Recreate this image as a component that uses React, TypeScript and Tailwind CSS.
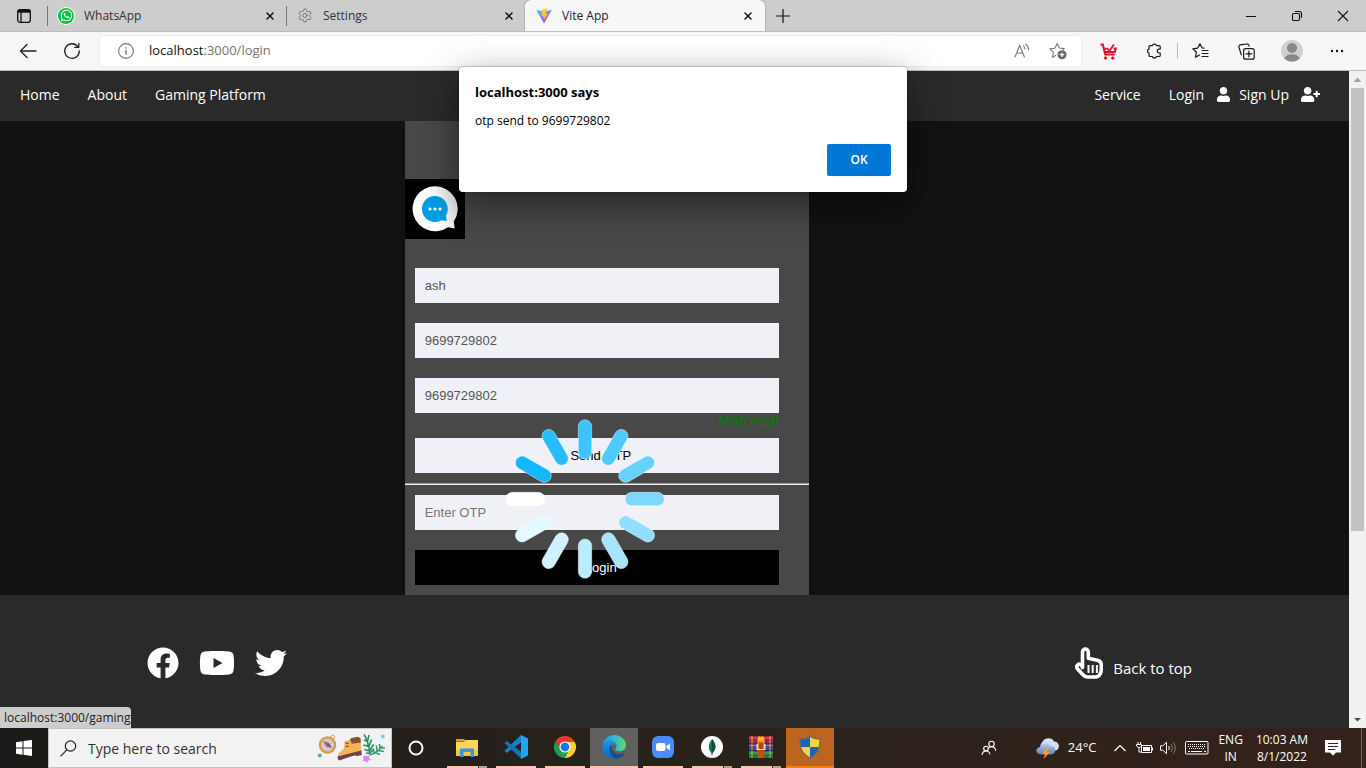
import React, { useState } from "react";
import { Settings, X } from "lucide-react";
import { FaFacebook, FaTwitter, FaUser, FaUserPlus, FaWhatsapp, FaYoutube } from "react-icons/fa";

/* ---------- Browser icons ---------- */

function TabActionsIcon() {
  return (
    <svg width="16" height="16" viewBox="0 0 16 16" fill="none" stroke="#111" strokeWidth="1.3">
      <rect x="1.7" y="1.7" width="12.6" height="12.6" rx="2.2" />
      <path d="M1.7 3.2h12.6" strokeWidth="3" />
      <path d="M5 4v10" />
    </svg>
  );
}

function WhatsAppIcon() {
  return (
    <span className="flex size-4 items-center justify-center rounded-full bg-[#0cc143] text-white ring-1 ring-white">
      <FaWhatsapp size={13} />
    </span>
  );
}

function ViteIcon() {
  return (
    <svg width="16" height="16" viewBox="0 0 16 16">
      <defs>
        <linearGradient id="viteBody" x1="0" y1="0" x2="0.6" y2="1">
          <stop offset="0" stopColor="#41d1ff" />
          <stop offset="1" stopColor="#bd34fe" />
        </linearGradient>
        <linearGradient id="viteBolt" x1="0" y1="0" x2="0" y2="1">
          <stop offset="0" stopColor="#ffdd35" />
          <stop offset="1" stopColor="#ffa800" />
        </linearGradient>
      </defs>
      <path d="M.3 2 8 15.4 15.7 2 8 3.3z" fill="url(#viteBody)" />
      <path d="M12 .3 5.900 1.400 5.500 8l1.900-.4-.5 2.500 1.200-.3-.8 3.600L11.800 6l-1.900.3.700-2.500z" fill="url(#viteBolt)" />
    </svg>
  );
}

function PlusIcon() {
  return (
    <svg width="16" height="16" viewBox="0 0 16 16" stroke="#111" strokeWidth="1.2">
      <path d="M8 1v14M1 8h14" />
    </svg>
  );
}

function MinimizeIcon() {
  return (
    <svg width="12" height="12" viewBox="0 0 12 12" stroke="#111">
      <path d="M1 6.500h10" />
    </svg>
  );
}

function RestoreIcon() {
  return (
    <svg width="12" height="12" viewBox="0 0 12 12" fill="none" stroke="#111" strokeWidth="1.1">
      <rect x="1.500" y="3.500" width="7" height="7" rx="1.200" />
      <path d="M3.800 1.500h4.700a2 2 0 0 1 2 2v4.600" />
    </svg>
  );
}

function CloseWindowIcon() {
  return (
    <svg width="12" height="12" viewBox="0 0 12 12" stroke="#111" strokeWidth="1.1">
      <path d="m1 1 10 10M11 1 1 11" />
    </svg>
  );
}

function BackIcon() {
  return (
    <svg width="18" height="16" viewBox="0 0 18 16" fill="none" stroke="#222" strokeWidth="1.3" strokeLinecap="round" strokeLinejoin="round">
      <path d="M17 8H1.500M8 1.500 1.500 8 8 14.500" />
    </svg>
  );
}

function ReloadIcon() {
  return (
    <svg width="18" height="18" viewBox="0 0 18 18" fill="none" stroke="#222" strokeWidth="1.300" strokeLinecap="round">
      <path d="M16.300 9A7.300 7.300 0 1 1 14.800 4.600" />
      <path d="M15.800 1.300v4h-4" />
    </svg>
  );
}

function InfoIcon() {
  return (
    <svg width="16" height="16" viewBox="0 0 16 16" fill="none" stroke="#757575" strokeWidth="1.100">
      <circle cx="8" cy="8" r="7.400" />
      <path d="M8 7v4.700" strokeWidth="1.400" />
      <circle cx="8" cy="4.900" r=".5" fill="#757575" strokeWidth=".6" />
    </svg>
  );
}

function ReadAloudIcon() {
  return (
    <svg width="16" height="16" viewBox="0 0 16 16" fill="none" stroke="#777" strokeWidth="1.100" strokeLinecap="round">
      <path d="M1 14 5.700 2.500 10.400 14M2.700 10h6" />
      <path d="M9.500 3c1 .7 1.400 1.700 1.400 3M11.700 1.200c1.900 1.300 2.900 3.200 2.900 5.600" />
    </svg>
  );
}

function StarAddIcon() {
  return (
    <svg width="18" height="18" viewBox="0 0 18 18" fill="none">
      <path
        d="M8.200 1.500 10.300 6l4.900.6-1.600 1.600M7 13.300l-3.500 2 .9-4.900L.9 6.900 5.900 6.200 8.200 1.500"
        stroke="#777"
        strokeWidth="1.100"
        strokeLinejoin="round"
      />
      <circle cx="13" cy="12.700" r="4.500" fill="#666" />
      <path d="M13 10.400V15M10.700 12.700h4.600" stroke="#fff" strokeWidth="1.200" />
    </svg>
  );
}

function CartIcon() {
  return (
    <svg width="17" height="17" viewBox="0 0 17 17" fill="none" stroke="#e60f25" strokeWidth="2">
      <path d="M.5 1.500h2.300l2.400 9.900h9.500" />
      <path d="M3.500 5.800h3.200M4.500 9h10.200l1.200-3.600h-2.500" />
      <path d="m7 5.200 2.500 2.600L13.900 1.500" strokeWidth="1.700" />
      <circle cx="5.500" cy="15" r="1.300" fill="#e60f25" strokeWidth=".8" />
      <circle cx="12.800" cy="15" r="1.300" fill="#e60f25" strokeWidth=".8" />
    </svg>
  );
}

function PuzzleIcon() {
  return (
    <svg width="16" height="16" viewBox="0 0 16 16" fill="none" stroke="#1a1a1a" strokeWidth="1.200" strokeLinejoin="round">
      <path d="M4 2.600h2.300a2.200 2.200 0 0 1 4.200 0h2.700a1 1 0 0 1 1 1v2.600h-1a1.900 1.900 0 0 0 0 3.800h1v2.500a1 1 0 0 1-1 1h-2.700a2.200 2.200 0 0 1-4.200 0H4a1 1 0 0 1-1-1V10a2 2 0 0 1 0-3.900V3.600a1 1 0 0 1 1-1z" />
    </svg>
  );
}

function FavoritesIcon() {
  return (
    <svg width="17" height="16" viewBox="0 0 17 16" fill="none" stroke="#1a1a1a" strokeWidth="1.200" strokeLinejoin="round" strokeLinecap="round">
      <path d="m12 5.100-2-.3L7.900.8 5.700 5.100.8 5.800l3.600 3.400-.9 4.900 4-2.100" />
      <path d="M10 7.500h6M10 10.500h6M10 13.500h6" />
    </svg>
  );
}

function CollectionsIcon() {
  return (
    <svg width="17" height="17" viewBox="0 0 17 17" fill="none" stroke="#1a1a1a" strokeWidth="1.200" strokeLinecap="round">
      <rect x="5.600" y="5.600" width="10.600" height="10.600" rx="2" />
      <path d="M10.900 8v5.800M8 10.900h5.800" />
      <path d="M3.300 11.800 1 4.500a2 2 0 0 1 1.300-2.600L8.500.9a2 2 0 0 1 2.300 1.200l.4 1.200" />
    </svg>
  );
}

function AvatarIcon() {
  return (
    <svg width="22" height="22" viewBox="0 0 22 22">
      <defs>
        <clipPath id="avatarClip">
          <circle cx="11" cy="11" r="10.500" />
        </clipPath>
      </defs>
      <circle cx="11" cy="11" r="11" fill="#d2d0ce" />
      <circle cx="11" cy="8" r="5" fill="#8a8886" />
      <ellipse cx="11" cy="19" rx="7.800" ry="4.700" fill="#8a8886" clipPath="url(#avatarClip)" />
    </svg>
  );
}

function MoreIcon() {
  return (
    <svg width="14" height="4" viewBox="0 0 14 4" fill="#111">
      <circle cx="2" cy="2" r="1.200" />
      <circle cx="7" cy="2" r="1.200" />
      <circle cx="12" cy="2" r="1.200" />
    </svg>
  );
}

/* ---------- Browser chrome ---------- */

function Tab({ icon, title, active = false }: { icon: React.ReactNode; title: string; active?: boolean }) {
  return (
    <div
      className={
        active
          ? "-ml-px flex h-8 w-60 items-center rounded-t-md bg-[#f7f7f7] pr-[11px] pl-[11px] shadow-[0_0_2px_rgba(0,0,0,0.4)]"
          : "flex h-8 w-[239px] items-center border-l border-transparent pr-[11px] pl-[9px]"
      }
    >
      <span className="flex size-4 items-center justify-center">{icon}</span>
      <span className={active ? "ml-[10px] flex-1 text-[#222]" : "ml-[10px] flex-1 text-[#333]"}>{title}</span>
      <button type="button" aria-label={"Close " + title} className="flex size-3 items-center justify-center text-[#111]">
        <X size={12} strokeWidth={3} />
      </button>
    </div>
  );
}

function ToolButton({ label, children }: { label: string; children: React.ReactNode }) {
  return (
    <button type="button" aria-label={label} className="flex h-8 w-full items-center justify-center">
      {children}
    </button>
  );
}

function BrowserHeader() {
  return (
    <header>
      <div className="flex h-8 items-center overflow-hidden border-b border-[#bdbdbd] bg-[#cdcdcd] text-[12px]">
        <button type="button" aria-label="Tab actions" className="flex h-5 w-12 items-center justify-center border-r border-[#777]">
          <TabActionsIcon />
        </button>
        <Tab icon={<WhatsAppIcon />} title="WhatsApp" />
        <span className="-ml-px h-5 w-px bg-[#777]" />
        <Tab icon={<Settings size={17} strokeWidth={1.5} color="#777" />} title="Settings" />
        <Tab icon={<ViteIcon />} title="Vite App" active />
        <button type="button" aria-label="New tab" className="flex h-8 w-9 items-center justify-center">
          <PlusIcon />
        </button>
        <div className="ml-auto flex">
          <button type="button" aria-label="Minimize" className="flex h-8 w-[46px] items-center justify-center">
            <MinimizeIcon />
          </button>
          <button type="button" aria-label="Restore" className="flex h-8 w-[46px] items-center justify-center">
            <RestoreIcon />
          </button>
          <button type="button" aria-label="Close window" className="flex h-8 w-[46px] items-center justify-center">
            <CloseWindowIcon />
          </button>
        </div>
      </div>
      <div className="flex h-[39px] items-center border-b border-[#b9bfb9] bg-[#f7f7f7] pl-1.5">
        <div className="grid w-[88px] grid-cols-2">
          <ToolButton label="Back">
            <BackIcon />
          </ToolButton>
          <ToolButton label="Refresh">
            <ReloadIcon />
          </ToolButton>
        </div>
        <div className="ml-1.5 flex h-[30px] flex-1 items-center rounded bg-white pl-[18px] shadow-[0_0_3px_rgba(0,0,0,0.1)]">
          <InfoIcon />
          <span className="ml-[15px] flex-1 text-[13px] text-[#757575]">
            <span className="text-[#111]">localhost</span>:3000/login
          </span>
          <button type="button" aria-label="Read aloud" className="flex w-9 justify-center">
            <ReadAloudIcon />
          </button>
          <button type="button" aria-label="Add to favorites" className="mr-[5px] flex w-9 justify-center">
            <StarAddIcon />
          </button>
        </div>
        <div className="ml-1 flex items-center pr-1.5">
          <div className="grid w-[92px] grid-cols-2">
            <ToolButton label="Shopping">
              <CartIcon />
            </ToolButton>
            <ToolButton label="Extensions">
              <PuzzleIcon />
            </ToolButton>
          </div>
          <span className="h-4 w-px bg-[#bbb]" />
          <div className="grid w-[182px] grid-cols-4">
            <ToolButton label="Favorites">
              <FavoritesIcon />
            </ToolButton>
            <ToolButton label="Collections">
              <CollectionsIcon />
            </ToolButton>
            <ToolButton label="Profile">
              <AvatarIcon />
            </ToolButton>
            <ToolButton label="More">
              <MoreIcon />
            </ToolButton>
          </div>
        </div>
      </div>
    </header>
  );
}

/* ---------- Web page ---------- */

function NavBar() {
  return (
    <nav className="flex h-[50px] items-center justify-between bg-[#2a2a2a] pr-[29px] pb-1 pl-5 text-[14px] text-white">
      <div className="flex gap-7">
        <a href="#home">Home</a>
        <a href="#about">About</a>
        <a href="#gaming">Gaming Platform</a>
      </div>
      <div className="flex items-center">
        <a href="#service" className="mr-7">
          Service
        </a>
        <a href="#login" className="flex items-center gap-3">
          Login <FaUser size={15} />
        </a>
        <a href="#signup" className="ml-2 flex items-center gap-3">
          Sign Up <FaUserPlus size={19} />
        </a>
      </div>
    </nav>
  );
}

function ChatLogo() {
  return (
    <svg width="60" height="60" viewBox="0 0 60 60" className="bg-black">
      <defs>
        <linearGradient id="bubble" x1="0" y1="0.6" x2="1" y2="0.4">
          <stop offset="0.5" stopColor="#fff" />
          <stop offset="1" stopColor="#e4e4e4" />
        </linearGradient>
      </defs>
      <path d="M30 7.300a22.500 22.500 0 1 0 13 40.900l6.700 1.300-.9-7A22.500 22.500 0 0 0 30 7.300z" fill="url(#bubble)" />
      <path d="M30 17a13 13 0 1 0 6.500 24.200l5.300.8-.9-5.300A13 13 0 0 0 30 17z" fill="#009fe3" />
      <circle cx="25" cy="30" r="1.600" fill="#fff" />
      <circle cx="30" cy="30" r="1.600" fill="#fff" />
      <circle cx="35" cy="30" r="1.600" fill="#fff" />
    </svg>
  );
}

const SPOKE_COLORS = [
  "#3bc4ff",
  "#4fcaff",
  "#66d1ff",
  "#7dd8ff",
  "#91deff",
  "#a7e5ff",
  "#bbebff",
  "#d0f2ff",
  "#e4f8ff",
  "#ffffff",
  "#12b7ff",
  "#25bdff",
];

function Spinner() {
  return (
    <svg className="pointer-events-none absolute top-[298px] left-[100px]" width="160" height="160" viewBox="-80 -80 160 160">
      {SPOKE_COLORS.map((color, i) => (
        <rect
          key={color}
          x="-6.700"
          y="-79.300"
          width="13.400"
          height="39.300"
          rx="6.700"
          fill={color}
          stroke="#fff"
          strokeOpacity="0.6"
          strokeWidth="0.700"
          transform={"rotate(" + i * 30 + ")"}
        />
      ))}
    </svg>
  );
}

const FIELD =
  "block h-[35px] w-full bg-[#f0f1f6] px-[10px] font-['Liberation_Sans',Arial,sans-serif] text-[13px] text-[#555] outline-none placeholder:text-[#757575]";
const FORM_BUTTON = "block h-[35px] w-full pl-2 font-['Liberation_Sans',Arial,sans-serif] text-[13px]";

function LoginCard() {
  const [name, setName] = useState("ash");
  const [phone, setPhone] = useState("9699729802");
  const [confirm, setConfirm] = useState("9699729802");
  const [otp, setOtp] = useState("");
  return (
    <form className="relative ml-[30%] w-[30%] bg-[#484848] pt-[58px] pb-[10px]" onSubmit={(e) => e.preventDefault()}>
      <ChatLogo />
      <div className="mt-[29px] ml-[10px] w-[90%]">
        <input aria-label="Name" className={FIELD} value={name} onChange={(e) => setName(e.target.value)} />
        <input aria-label="Phone number" className={FIELD + " mt-5"} value={phone} onChange={(e) => setPhone(e.target.value)} />
        <input aria-label="Confirm phone number" className={FIELD + " mt-5"} value={confirm} onChange={(e) => setConfirm(e.target.value)} />
        <p className="h-[25px] text-right text-[15px] leading-[14px] text-[#008000] italic">Matched!</p>
        <button type="button" className={FORM_BUTTON + " bg-[#f0f1f6] text-black"}>
          Send OTP
        </button>
      </div>
      <hr className="mt-[10px] h-[2px] border-t border-b border-t-[#9a9a9a] border-b-[#eeeeee]" />
      <div className="mt-[10px] ml-[10px] w-[90%]">
        <input aria-label="OTP" className={FIELD} placeholder="Enter OTP" value={otp} onChange={(e) => setOtp(e.target.value)} />
        <button type="submit" className={FORM_BUTTON + " mt-5 bg-black text-white"}>
          Login
        </button>
      </div>
      <Spinner />
    </form>
  );
}

function PointingHandIcon() {
  return (
    <svg width="28" height="32" viewBox="0 0 28 32" fill="none" stroke="#fff" strokeWidth="3.600" strokeLinejoin="round">
      <path d="M7.500 20.500V5a2.900 2.900 0 0 1 5.800 0v6.200l9 2c2.600.6 4 2.200 4 4.600v4.500c0 2-.4 3.300-1.200 4.700-1 2-2.500 3-4.600 3h-8c-2 0-3.200-.7-4.500-2.200L2.600 22c-1.200-1.600-1-3.200.2-4.200 1.200-1 2.800-.8 3.800.5z" />
      <path d="M13.500 18v8M17.700 18v8M21.900 18v8" strokeWidth="2" />
    </svg>
  );
}

function PageFooter() {
  return (
    <footer className="flex flex-1 items-start justify-between bg-[#2a2a2a] pt-[50px] pr-[157px] pl-[147px] text-white">
      <div className="flex items-center gap-5">
        <a href="#facebook" aria-label="Facebook">
          <FaFacebook size={32} />
        </a>
        <a href="#youtube" aria-label="YouTube">
          <FaYoutube size={36} />
        </a>
        <a href="#twitter" aria-label="Twitter">
          <FaTwitter size={32} />
        </a>
      </div>
      <a href="#top" className="flex items-end gap-[10px] pt-0.5 text-[15px]">
        <PointingHandIcon />
        Back to top
      </a>
    </footer>
  );
}

function Scrollbar() {
  return (
    <div className="flex w-[17px] shrink-0 flex-col items-center bg-[#f1f1f1]">
      <svg width="17" height="17" viewBox="0 0 17 17">
        <path d="M8.500 6.500 12.500 11h-8z" fill="#a3a3a3" />
      </svg>
      <div className="w-[13px] grow-[443] bg-[#c1c1c1]" />
      <div className="grow-[180]" />
      <svg width="17" height="17" viewBox="0 0 17 17">
        <path d="M8.500 10.500 12 7H5z" fill="#505050" />
      </svg>
    </div>
  );
}

function AlertDialog() {
  return (
    <section
      role="alertdialog"
      aria-labelledby="alert-title"
      className="absolute top-[67px] left-1/2 w-[448px] -translate-x-1/2 rounded bg-white p-4 text-black shadow-[0_12px_36px_rgba(0,0,0,0.5),0_0_2px_rgba(0,0,0,0.4)]"
    >
      <h1 id="alert-title" className="text-[13px] leading-[18px] font-bold">
        localhost:3000 says
      </h1>
      <p className="mt-3 text-[12px] leading-4">otp send to 9699729802</p>
      <div className="mt-[15px] flex justify-end">
        <button type="button" className="h-8 w-16 rounded-xs bg-[#0078d7] text-[12px] font-semibold text-white">
          OK
        </button>
      </div>
    </section>
  );
}

/* ---------- Taskbar ---------- */

function SearchArt() {
  return (
    <svg width="72" height="30" viewBox="0 0 72 30">
      <circle cx="15.800" cy="4" r="1.900" fill="none" stroke="#dba24a" />
      <circle cx="10.500" cy="12" r="8.700" fill="#d89a45" />
      <circle cx="10.500" cy="12" r="6.500" fill="#cfc8cc" />
      <path d="m6.500 8.500 5.500 1.500 3 5-5.500-1.500z" fill="#6a5f78" />
      <path d="m6.500 8.500 5.500 1.500-2.500 3.500z" fill="#e34a54" />
      <circle cx="2.800" cy="22.500" r="1.900" fill="#3fc163" />
      <path d="M27.500 8.500 34 6l9.500-1 .8 14L21 24.500c-.5-3 .5-5 3.500-6.500 2.500-1.300 3.500-5 3-9.500z" fill="#f3b454" />
      <path d="M33 6.500 34.500 5l6.500-1.300 2.500 1.600.3 4.200-9 1.300z" fill="#85503f" />
      <path d="m28 10 4 .6M28 13l4 .6" stroke="#9e5b34" strokeWidth="1.200" />
      <path d="m20.500 23.500 23.800-6 .5 4.500-5.500 1.200-.5-1-4 1-12.800 4.300c-1-.8-1.500-2-1.500-4z" fill="#70404f" />
      <path d="M47 1.500c4 5 5 12 6 20M47 7l3.500 1.500L52 2M46.500 12l5.500 1.500 2.500-7M47.500 16.500l5 1.500 4-6.500M49 20l3.500.5 4-4" fill="none" stroke="#2f8a68" strokeWidth="1.600" />
      <path d="M53 22c4-1.500 9-4 12.500-9M57 20l-1-4.500M60 18l-.5-5.500M63 16l-.5-5M58 19.500l5 2M61.500 17.500l5.500 1M64 15h4" fill="none" stroke="#379b78" strokeWidth="1.600" />
      <circle cx="65.800" cy="3.500" r="1.900" fill="#6cd4ee" />
      <path d="m47.500 22 2.300 1.300 2.700-1.300-.5 3 2 2-2.700.6-1 2.400-1.800-2-3 .5 1.200-2.700-1.200-2.500 2 .4z" fill="#d985f4" />
    </svg>
  );
}

function ExplorerIcon() {
  return (
    <svg width="24" height="24" viewBox="0 0 24 24">
      <path d="M1 4h8l2 2h-10z" fill="#dea31b" />
      <path d="M1 6.500h8L11 5h12v16H1z" fill="#ffd45e" />
      <path d="M1 15h22v6H1z" fill="#fbc43f" />
      <path d="M5 22v-8.500h14V22h-3.500v-5h-7v5z" fill="#3d94dd" />
    </svg>
  );
}

function VsCodeIcon() {
  return (
    <svg width="24" height="24" viewBox="0 0 24 24">
      <path d="M17 0 .5 15.800l2.300 2.200L17.500 7z" fill="#1283cc" />
      <path d="M.5 8.200 2.800 6 17.500 17v7z" fill="#1473b5" />
      <path d="M17 0v24l7-3.500v-17z" fill="#27a3ee" />
    </svg>
  );
}

function ChromeIcon() {
  const sector = "M21.800 7A11 11 0 0 0 2.770 6.010L7.670 14.500 12 7z";
  return (
    <svg width="24" height="24" viewBox="0 0 24 24">
      <path d={sector} fill="#e33b2e" />
      <path d={sector} fill="#fdcc2e" transform="rotate(120 12 12)" />
      <path d={sector} fill="#219d50" transform="rotate(240 12 12)" />
      <circle cx="12" cy="12" r="5.600" fill="#fff" />
      <circle cx="12" cy="12" r="4.400" fill="#1a73e8" />
    </svg>
  );
}

function EdgeIcon() {
  return (
    <svg width="24" height="24" viewBox="0 0 24 24">
      <defs>
        <linearGradient id="edgeTop" x1="0" y1="0.5" x2="1" y2="0.5">
          <stop offset="0" stopColor="#1f8fe0" />
          <stop offset="0.5" stopColor="#2fb9dc" />
          <stop offset="1" stopColor="#5fdc58" />
        </linearGradient>
        <linearGradient id="edgeLow" x1="0" y1="0" x2="0" y2="1">
          <stop offset="0" stopColor="#1b95e0" />
          <stop offset="1" stopColor="#1266b8" />
        </linearGradient>
      </defs>
      <path d="M0 12C.5 5 5.500 0 12 0s12 4.800 12 10c0 4-3 6.300-6.500 6.300-2.700 0-4.300-1-4.300-2 0-.8 1.300-1.300 1.300-3.300C14.500 8 11.500 5.800 8 5.800S1 8 0 12z" fill="url(#edgeTop)" />
      <path d="M0 12c.8-4 4.500-6.300 8-6.300s6.500 2.200 6.500 5.300c-.8-1.300-2-1.700-3-1.700-3 0-4 3-4 5 0 4.500 3 8 6 9.500A12 12 0 0 1 0 12z" fill="url(#edgeLow)" />
      <path d="M9.500 10c-3 2-3.300 9.500 4 13.800 4 .1 7.200-2 9-5 .3-.6 0-.8-.5-.6-6 2.600-13.500-1-12.500-8.200z" fill="#174f91" />
    </svg>
  );
}

function ZoomIcon() {
  return (
    <svg width="24" height="24" viewBox="0 0 24 24">
      <rect x="1" y="1" width="22" height="22" rx="6" fill="#4a8cff" />
      <rect x="5" y="8" width="9.500" height="8" rx="2" fill="#fff" />
      <path d="m15.500 11 3.500-2.500v7L15.500 13z" fill="#fff" />
    </svg>
  );
}

function MongoIcon() {
  return (
    <svg width="24" height="24" viewBox="0 0 24 24">
      <circle cx="12" cy="12" r="11" fill="#fff" />
      <path d="M12 4c5 6 4 11 0 14.500C8 15 7.500 10 12 4z" fill="#10774e" />
      <path d="M12 4c5 6 4 11 0 14.500z" fill="#0a5138" />
      <path d="M12 17v3" stroke="#0a5138" />
    </svg>
  );
}

function WinRarIcon() {
  return (
    <svg width="24" height="24" viewBox="0 0 24 24">
      <rect y="1" width="24" height="7" fill="#a81f40" />
      <rect y="8.500" width="24" height="7" fill="#453e94" />
      <rect y="16" width="24" height="7" fill="#157a3a" />
      <path d="M0 3h24M0 10.500h24M0 18h24" stroke="#e9d9dc" opacity=".45" />
      <path d="M3 1v7M3 8.500v7M3 16v7M21 1v7M21 8.500v7M21 16v7" stroke="#d9b13c" />
      <rect x="8.500" y="15" width="7" height="8" fill="#b85416" />
      <path d="M8.500 3.500 10 1l2 1 2-1 1.500 2.500V9h-7z" fill="#f8b62d" />
      <rect x="7.500" y="9" width="9" height="6" fill="#efe4d8" />
      <path d="M9.500 14V7h5v7" fill="#a8480f" stroke="#ec7a1c" strokeWidth="1.300" />
    </svg>
  );
}

function ShieldIcon() {
  return (
    <svg width="24" height="24" viewBox="0 0 24 24">
      <defs>
        <clipPath id="shieldClip">
          <path d="M12 1c3 2.500 6 3 10 3 0 9-1 14-10 19C3 18 2 13 2 4c4 0 7-.5 10-3z" />
        </clipPath>
      </defs>
      <g clipPath="url(#shieldClip)">
        <path d="M0 0h12v12H0zM12 12h12v12H12z" fill="#1766b5" />
        <path d="M12 0h12v12H12zM0 12h12v12H0z" fill="#ffcf46" />
      </g>
      <path d="M12 1c3 2.500 6 3 10 3 0 9-1 14-10 19C3 18 2 13 2 4c4 0 7-.5 10-3z" fill="none" stroke="#6b6b69" strokeWidth="1.300" />
    </svg>
  );
}

function AppButton({
  label,
  kind = "single",
  children,
}: {
  label: string;
  kind?: "single" | "stacked" | "focused" | "alert";
  children: React.ReactNode;
}) {
  const tone = kind === "focused" ? "bg-[#62605e] px-0" : kind === "alert" ? "bg-[#bd641f] px-0" : "px-1";
  return (
    <button type="button" aria-label={label} className={"flex h-10 w-12 flex-col items-center " + tone}>
      <span className="flex flex-1 items-center justify-center">{children}</span>
      <span className={kind === "alert" ? "flex h-0.5 w-full bg-[#ff7c0a]" : "flex h-0.5 w-full bg-[#ffc5a8]"}>
        {kind === "stacked" && <span className="ml-auto w-[9px] border-l border-[#3a2c24] bg-[#c49a85]" />}
      </span>
    </button>
  );
}

function PeopleIcon() {
  return (
    <svg width="16" height="16" viewBox="0 0 16 16" fill="none" stroke="#fff" strokeWidth="1.100">
      <circle cx="10.500" cy="4" r="2.700" />
      <circle cx="5" cy="8.500" r="2.300" />
      <path d="M1 15c.3-2.500 1.800-4 4-4s3.600 1.300 4 3.500M7.500 8.500c.8-1.200 1.800-1.700 3-1.700 2.400 0 4 1.700 4.300 4" />
    </svg>
  );
}

function WeatherIcon() {
  return (
    <svg width="24" height="22" viewBox="0 0 24 22">
      <defs>
        <linearGradient id="cloud" x1="0" y1="0" x2="0" y2="1">
          <stop offset="0" stopColor="#b9cdea" />
          <stop offset="1" stopColor="#5d84b6" />
        </linearGradient>
      </defs>
      <path d="M9 14a5 5 0 0 1-3-8.500C8 .5 16-.5 18 4.500c5 0 7 6.500 2 9z" fill="#d3e0f3" />
      <path d="M5 17.500c-5.500 0-6.500-6-1-7.500C5 5.500 12 5 14.500 9c6-1 6.500 8.500 0 8.500z" fill="url(#cloud)" />
      <path d="m10 11-4 6h3l-1.500 5L14 15h-3.500l2-4z" fill="#ff9c1a" />
    </svg>
  );
}

function SystemTray() {
  return (
    <div className="ml-auto flex h-10 items-center text-[12px] text-white">
      <PeopleIcon />
      <span className="ml-[39px]">
        <WeatherIcon />
      </span>
      <span className="ml-2 text-[13px]">24°C</span>
      <svg className="ml-[17px]" width="14" height="14" viewBox="0 0 14 14" fill="none" stroke="#fff" strokeWidth="1.200">
        <path d="m1.500 10 5.500-5.500L12.500 10" />
      </svg>
      <svg className="ml-[9px]" width="17" height="14" viewBox="0 0 17 14" fill="none" stroke="#fff">
        <path d="M5.500 4.500h10v7h-10z" />
        <path d="M7 6h7v4H7zM16 6.500h1v3h-1z" fill="#fff" stroke="none" />
        <path d="M2 1v2M4.500 1v2M.5 3.500h5v1.500L4 6.500H2.500L.5 5zM3 7v4h2" />
      </svg>
      <svg className="ml-[7px]" width="17" height="14" viewBox="0 0 17 14" fill="none" stroke="#fff">
        <path d="M.5 4.800h2.300L6.500 1.300v11.400L2.800 9.200H.5z" />
        <path d="M8.500 5c1 1.200 1 2.800 0 4" />
        <path d="M10.800 3c2 2.300 2 5.700 0 8M13 1.200c3 3.300 3 8.300 0 11.600" stroke="#8b817b" />
      </svg>
      <svg className="ml-2" width="24" height="14" viewBox="0 0 24 14" fill="none" stroke="#fff">
        <rect x=".5" y=".5" width="22.500" height="12.500" rx="1" />
        <path d="M3 3.500h18M3 5.500h18M4 7.500h16" strokeDasharray="1 1" />
        <path d="M3 10.500h2M6 10.500h11M19 10.500h2" />
      </svg>
      <div className="ml-[9px] text-center leading-[17px]">
        <div>ENG</div>
        <div>IN</div>
      </div>
      <div className="ml-[13px] text-center leading-[17px]">
        <div>10:03 AM</div>
        <div>8/1/2022</div>
      </div>
      <svg className="ml-[17px]" width="16" height="16" viewBox="0 0 16 16">
        <path d="M0 0h16v12.500h-5L8 15.800 5 12.500H0z" fill="#fff" />
        <path d="M3 3.500h10M3 6.500h10M3 9.500h7" stroke="#30211b" />
      </svg>
      <span className="mr-1 ml-[20px] h-10 w-px bg-[#6d625b]" />
    </div>
  );
}

function Taskbar() {
  return (
    <div className="flex h-10 shrink-0 items-center bg-linear-to-r from-[#1d1b19] via-[#28221b] to-[#34221b]">
      <button type="button" aria-label="Start" className="flex h-10 w-12 items-center justify-center">
        <svg width="16" height="16" viewBox="0 0 16 16" fill="#fff">
          <path d="M0 2.200 6.500 1.300V7.500H0zM7.500 1.100 16 0v7.500H7.500zM0 8.500h6.500v6.200L0 13.800zM7.500 8.500H16V16l-8.500-1.200z" />
        </svg>
      </button>
      <label className="flex h-10 w-[344px] items-center border border-[#c4c4c4] bg-[#f2f2f2] pr-[2px] pl-[11px]">
        <svg width="17" height="17" viewBox="0 0 17 17" fill="none" stroke="#222" strokeWidth="1.200">
          <circle cx="10.500" cy="6" r="5.200" />
          <path d="M6.800 9.800.5 16.300" />
        </svg>
        <input
          aria-label="Search"
          placeholder="Type here to search"
          className="ml-[11px] min-w-0 flex-1 bg-transparent text-[14px] outline-none placeholder:text-[#333]"
        />
        <SearchArt />
      </label>
      <button type="button" aria-label="Cortana" className="flex h-10 w-12 items-center justify-center">
        <svg width="16" height="16" viewBox="0 0 16 16" fill="none" stroke="#fff" strokeWidth="2">
          <circle cx="8" cy="8" r="6.500" />
        </svg>
      </button>
      <div className="ml-[3px] flex gap-px">
        <AppButton label="File Explorer" kind="stacked">
          <ExplorerIcon />
        </AppButton>
        <AppButton label="Visual Studio Code">
          <VsCodeIcon />
        </AppButton>
        <AppButton label="Chrome">
          <ChromeIcon />
        </AppButton>
        <AppButton label="Edge" kind="focused">
          <EdgeIcon />
        </AppButton>
        <AppButton label="Zoom">
          <ZoomIcon />
        </AppButton>
        <AppButton label="MongoDB Compass" kind="stacked">
          <MongoIcon />
        </AppButton>
        <AppButton label="WinRAR" kind="stacked">
          <WinRarIcon />
        </AppButton>
        <AppButton label="User Account Control" kind="alert">
          <ShieldIcon />
        </AppButton>
      </div>
      <SystemTray />
    </div>
  );
}

export default function App() {
  return (
    <div className="relative flex min-h-screen flex-col bg-[#121212] font-['Segoe_UI','Open_Sans',sans-serif]">
      <BrowserHeader />
      <div className="flex flex-1">
        <div className="relative flex flex-1 flex-col">
          <NavBar />
          <main className="bg-[#121212]">
            <LoginCard />
          </main>
          <PageFooter />
          <div className="absolute bottom-0 left-0 flex h-[21px] items-center rounded-tr bg-[#cdcdcd] pr-px pl-1 text-[12px] text-[#222]">
            localhost:3000/gaming
          </div>
        </div>
        <Scrollbar />
      </div>
      <Taskbar />
      <AlertDialog />
    </div>
  );
}
